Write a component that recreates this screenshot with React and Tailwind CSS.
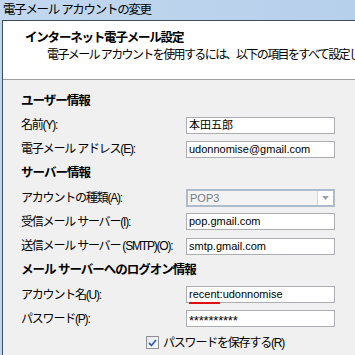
const field = "h-[17px] w-[149px] border border-[#abadb3] bg-white px-[2px] text-[11px] leading-[15px] text-black flex items-center whitespace-nowrap"

function Row({ label, bold, children }) {
  return (
    <div className="flex h-[24.2px] items-center">
      <div className={`w-[183px] shrink-0 pl-[18px] whitespace-nowrap ${bold ? "font-bold text-[12.5px] tracking-[-1px]" : "tracking-[-1.2px]"}`}>{label}</div>
      {children}
    </div>
  )
}

export default function App() {
  return (
    <div className="w-[355px] h-[355px] overflow-hidden bg-[#bed5ee] text-[12px] text-black" style={{ fontFamily: '"Liberation Sans", "Noto Sans CJK JP", sans-serif' }}>
      {/* Title bar */}
      <div className="h-[20px] bg-gradient-to-r from-[#c3d8f0] to-[#b6cfea] pl-[3px] flex items-center tracking-[-1.3px] text-[12.5px]">
        電子メール アカウントの変更
      </div>

      <div className="flex h-[335px]">
        <div className="w-[2px] bg-[#bed5ee]" />
        <div className="flex-1 min-w-0 border-l border-t border-[#3f4d5e] flex flex-col">
          {/* Header */}
          <div className="h-[59px] bg-white border-b border-[#a0a0a0] pt-[9px] overflow-hidden">
            <div className="pl-[22px] font-bold text-[12.5px] tracking-[-1.2px] leading-[16px]">インターネット電子メール設定</div>
            <div className="pl-[44px] mt-[1px] leading-[16px] whitespace-nowrap tracking-[-1.6px]">
              電子メール アカウントを使用するには、以下の項目をすべて設定してください。
            </div>
          </div>

          {/* Body */}
          <div className="flex-1 bg-[#f0f0f0] pt-[9px]">
            <Row label="ユーザー情報" bold />
            <Row label="名前(Y):">
              <div className={field}>本田五郎</div>
            </Row>
            <Row label="電子メール アドレス(E):">
              <div className={field}>udonnomise@gmail.com</div>
            </Row>
            <Row label="サーバー情報" bold />
            <Row label="アカウントの種類(A):">
              <div className="h-[18px] w-[149px] border-2 border-[#adbbcb] bg-[#f3f3f3] flex items-center justify-between text-[11px]">
                <span className="pl-[2px] text-[#7a7a7a]">POP3</span>
                <span className="h-[14px] w-[16px] bg-white border-l border-[#d5d5d5] flex items-center justify-center">
                  <svg width="7" height="4" viewBox="0 0 7 4">
                    <path d="M0 0h7L3.5 4z" fill="#a0a0a0" />
                  </svg>
                </span>
              </div>
            </Row>
            <Row label="受信メール サーバー(I):">
              <div className={field}>pop.gmail.com</div>
            </Row>
            <Row label="送信メール サーバー (SMTP)(O):">
              <div className={field}>smtp.gmail.com</div>
            </Row>
            <Row label="メール サーバーへのログオン情報" bold />
            <Row label="アカウント名(U):">
              <div className={field}>
                <span className="relative">
                  recent
                  <span className="absolute left-0 right-0 bottom-[-2px] h-[2px] bg-[#e01010]" />
                </span>
                :udonnomise
              </div>
            </Row>
            <Row label="パスワード(P):">
              <div className={field}>
                <span className="text-[13px] tracking-[-0.2px] pt-[4px]">**********</span>
              </div>
            </Row>
            <div className="flex h-[24.2px] items-center pl-[143px] gap-[4px]">
              <span className="w-[13px] h-[13px] border border-[#8f8f8f] bg-gradient-to-br from-[#dfe6ee] to-white flex items-center justify-center">
                <svg width="9" height="8" viewBox="0 0 9 8">
                  <path d="M1 4l2.5 2.5L8 1" stroke="#3a5fb0" strokeWidth="1.8" fill="none" />
                </svg>
              </span>
              <span className="tracking-[-1.2px] whitespace-nowrap">パスワードを保存する(R)</span>
            </div>
          </div>
        </div>
      </div>
    </div>
  )
}
